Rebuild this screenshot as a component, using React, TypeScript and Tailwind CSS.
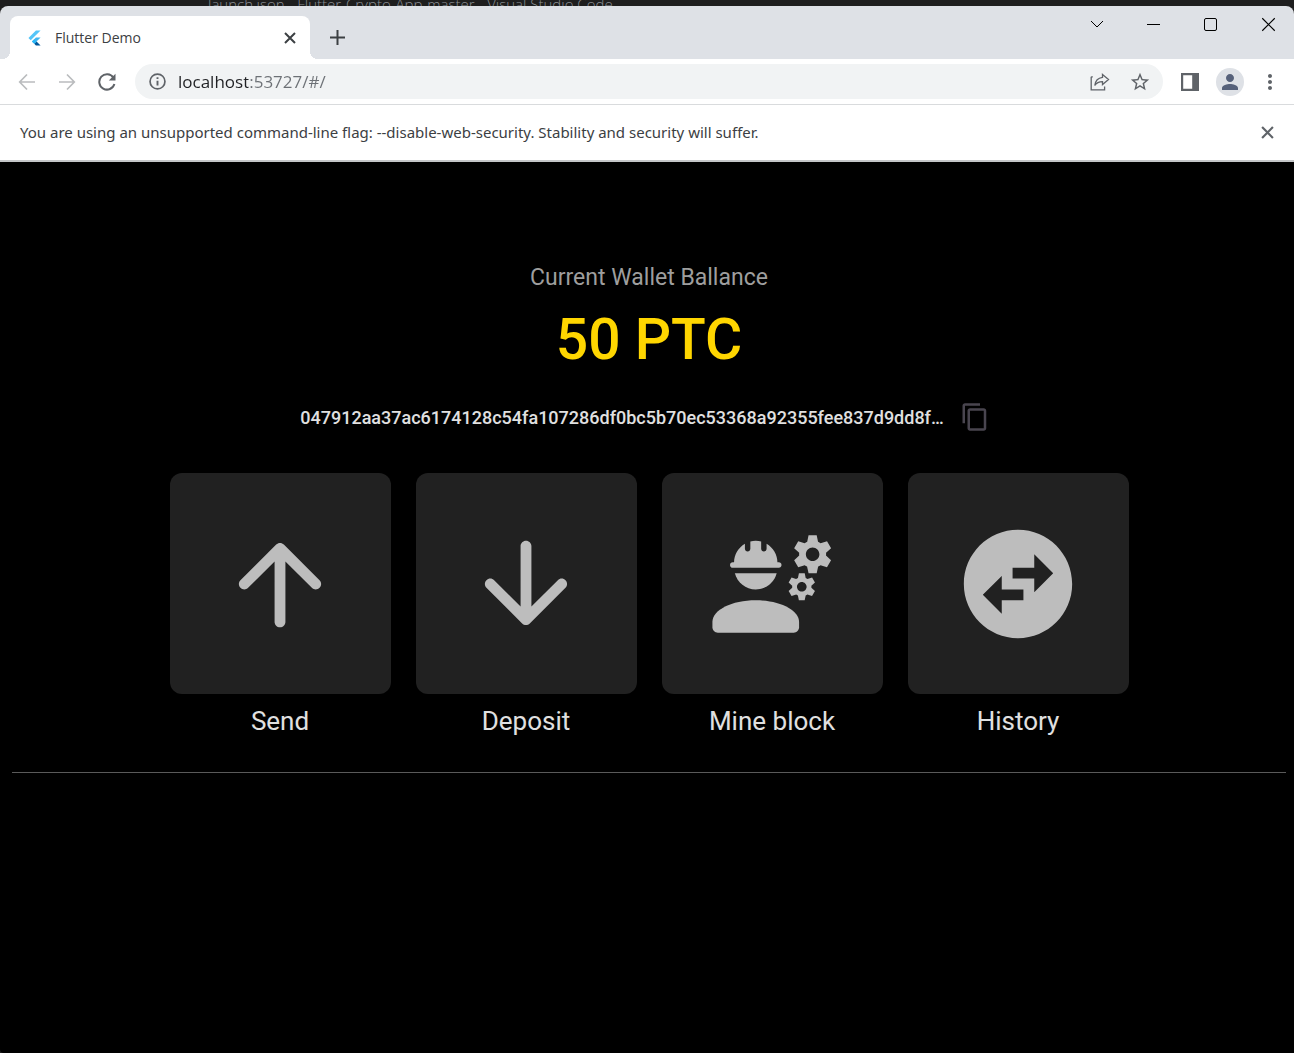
import React from "react";
import { MdContentCopy, MdSwapHorizontalCircle, MdPerson, MdStarBorder, MdMoreVert } from "react-icons/md";

const CHROME_FONT = "font-['Open_Sans','Noto_Sans',sans-serif]";

function FlutterLogo() {
  return (
    <svg viewBox="0 0 24 24" className="h-4 w-[15px] shrink-0" aria-hidden="true">
      <path d="M14.3 0 2.3 12 6 15.7 21.7 0z" fill="#54c5f8" />
      <path d="M14.3 11.1 7.9 17.5l3.7 3.7 10.1-10.1z" fill="#41b6f0" />
      <path d="m11.6 21.2 2.7 2.8h7.4l-6.4-6.5z" fill="#01579b" />
      <path d="m7.9 17.5 3.7-3.7 3.7 3.7-3.7 3.7z" fill="#29b6f6" />
    </svg>
  );
}

function Cross({ className }: { className: string }) {
  return (
    <svg viewBox="0 0 12 12" className={className} fill="none" stroke="currentColor" aria-hidden="true">
      <path d="M1 1l10 10M11 1L1 11" />
    </svg>
  );
}

function UpArrow() {
  return (
    <svg viewBox="0 0 24 24" className="size-[130px]" fill="currentColor" aria-hidden="true">
      <path d="M13 19V7.83l4.88 4.88c.39.39 1.03.39 1.42 0 .39-.39.39-1.02 0-1.41l-6.59-6.59c-.39-.39-1.02-.39-1.41 0l-6.6 6.58c-.39.39-.39 1.02 0 1.41.39.39 1.02.39 1.41 0L11 7.83V19c0 .55.45 1 1 1s1-.45 1-1z" />
    </svg>
  );
}

function DownArrow() {
  return (
    <svg viewBox="0 0 24 24" className="size-[130px]" fill="currentColor" aria-hidden="true">
      <path d="M11 5v11.17l-4.88-4.88c-.39-.39-1.03-.39-1.42 0-.39.39-.39 1.02 0 1.41l6.59 6.59c.39.39 1.02.39 1.41 0l6.59-6.59c.39-.39.39-1.02 0-1.41-.39-.39-1.02-.39-1.41 0L13 16.17V5c0-.55-.45-1-1-1s-1 .45-1 1z" />
    </svg>
  );
}

function Engineer() {
  return (
    <svg viewBox="0 0 24 24" className="size-[130px]" fill="currentColor" aria-hidden="true">
      <path d="M9 15c-4.42 0-8 1.79-8 4v1c0 .55.45 1 1 1h14c.55 0 1-.45 1-1v-1c0-2.21-3.58-4-8-4z" />
      <path d="M4.74 9h8.53c.27 0 .49-.22.49-.49v-.02c0-.27-.22-.49-.49-.49H13c0-1.48-.81-2.75-2-3.45v.95c0 .28-.22.5-.5.5s-.5-.22-.5-.5V4.14C9.68 4.06 9.35 4 9 4s-.68.06-1 .14V5.5c0 .28-.22.5-.5.5S7 5.78 7 5.5v-.95C5.81 5.25 5 6.52 5 8h-.26c-.27 0-.49.22-.49.49v.03c0 .26.22.48.49.48z" />
      <path d="M9 13c1.86 0 3.41-1.28 3.86-3H5.14c.45 1.72 2 3 3.86 3z" />
      <path d="M21.98 6.23l.93-.83-.75-1.3-1.19.39c-.14-.11-.3-.2-.47-.27L20.25 3h-1.5l-.25 1.22c-.17.07-.33.16-.48.27l-1.18-.39-.75 1.3.93.83c-.02.17-.02.35 0 .52l-.93.85.75 1.3 1.2-.38c.13.1.28.18.43.25l.28 1.23h1.5l.27-1.22c.16-.07.3-.15.44-.25l1.19.38.75-1.3-.93-.85c.03-.19.02-.36.01-.53zM19.5 7.75c-.69 0-1.25-.56-1.25-1.25s.56-1.25 1.25-1.25 1.25.56 1.25 1.25-.56 1.25-1.25 1.25z" />
      <path d="M19.4 10.79l-.85.28c-.1-.08-.21-.14-.33-.19l-.18-.88h-1.07l-.18.87c-.12.05-.24.12-.34.19l-.84-.28-.54.93.66.59c-.01.13-.01.25 0 .37l-.66.61.54.93.86-.27c.1.07.2.13.31.18l.18.88h1.07l.19-.87c.11-.05.22-.11.32-.18l.85.27.54-.93-.66-.61c.01-.13.01-.25 0-.37l.66-.59-.53-.93zm-1.9 2.6c-.49 0-.89-.4-.89-.89s.4-.89.89-.89.89.4.89.89-.4.89-.89.89z" />
    </svg>
  );
}

const actions = [
  { label: "Send", icon: <UpArrow /> },
  { label: "Deposit", icon: <DownArrow /> },
  { label: "Mine block", icon: <Engineer /> },
  { label: "History", icon: <MdSwapHorizontalCircle className="size-[130px]" /> },
];

function TitleBar() {
  return (
    <header className="flex h-[53px] items-end rounded-t-lg bg-[#dee1e6] pl-[10px]">
      <div className="relative flex h-[43px] w-[300px] items-center rounded-t-lg bg-white pr-3 pl-[17px] before:absolute before:bottom-0 before:-left-2 before:size-2 before:bg-[radial-gradient(circle_at_0_0,#dee1e6_8px,white_8px)] after:absolute after:-right-2 after:bottom-0 after:size-2 after:bg-[radial-gradient(circle_at_100%_0,#dee1e6_8px,white_8px)]">
        <FlutterLogo />
        <span className="ml-[13px] flex-1 text-sm text-[#3c4043]">Flutter Demo</span>
        <button type="button" aria-label="Close tab" className="grid size-4 place-items-center text-[#3c4043]">
          <Cross className="size-3 stroke-2" />
        </button>
      </div>
      <button type="button" aria-label="New tab" className="grid h-[43px] w-[54px] place-items-center text-[#3c4043]">
        <svg viewBox="0 0 15 15" className="size-[15px]" fill="none" stroke="currentColor" strokeWidth="2" aria-hidden="true">
          <path d="M7.5 0v15M0 7.5h15" />
        </svg>
      </button>
      <div className="ml-auto flex h-full items-start pt-0.5 pr-px text-black">
        <button type="button" aria-label="Search tabs" className="grid h-8 w-14 place-items-center">
          <svg viewBox="0 0 14 8" className="h-2 w-3.5" fill="none" stroke="currentColor" aria-hidden="true">
            <path d="M1 1l6 6 6-6" />
          </svg>
        </button>
        <button type="button" aria-label="Minimize" className="grid h-8 w-14 place-items-center">
          <span className="h-px w-[13px] bg-black" />
        </button>
        <button type="button" aria-label="Maximize" className="grid h-8 w-[58px] place-items-center">
          <span className="size-[13px] rounded-xs border border-black" />
        </button>
        <button type="button" aria-label="Close window" className="grid h-8 w-[54px] place-items-center pl-1">
          <Cross className="size-[15px] stroke-[0.9]" />
        </button>
      </div>
    </header>
  );
}

function Toolbar() {
  return (
    <nav aria-label="Browser toolbar" className="flex h-[46px] items-center border-b border-[#d9dbdd] bg-white pr-[10px] pl-[7px] text-[#5f6368]">
      <button type="button" aria-label="Back" className="grid size-10 place-items-center text-[#babcbe]">
        <svg viewBox="0 0 18 18" className="size-[18px]" fill="none" stroke="currentColor" strokeWidth="1.7" aria-hidden="true">
          <path d="M17 9H2M9 1.5L1.7 9 9 16.5" />
        </svg>
      </button>
      <button type="button" aria-label="Forward" className="grid size-10 place-items-center text-[#babcbe]">
        <svg viewBox="0 0 18 18" className="size-[18px]" fill="none" stroke="currentColor" strokeWidth="1.7" aria-hidden="true">
          <path d="M1 9h15M9 1.5L16.3 9 9 16.5" />
        </svg>
      </button>
      <button type="button" aria-label="Reload" className="grid size-10 place-items-center">
        <svg viewBox="0 0 18 18" className="size-[18px]" fill="none" stroke="currentColor" strokeWidth="2" aria-hidden="true">
          <path d="M15.4 4.6A7.7 7.7 0 1 0 16.4 11" />
          <path d="M17.5 0.8v6.7h-6.7z" fill="currentColor" stroke="none" />
        </svg>
      </button>
      <div className="ml-2 flex h-[35px] flex-1 items-center rounded-full bg-[#f1f3f4] pr-[11px] pl-[14px]">
        <svg viewBox="0 0 16 16" className="size-[17px] shrink-0" fill="none" stroke="currentColor" strokeWidth="1.6" aria-hidden="true">
          <circle cx="8" cy="8" r="7" />
          <path d="M8 7.2v4.6M8 4v1.7" strokeWidth="1.8" />
        </svg>
        <input
          type="text"
          aria-label="Address"
          defaultValue="localhost:53727/#/"
          className="ml-3 min-w-0 flex-1 bg-linear-[to_right,#202124_70px,#6c7075_70px] bg-clip-text text-[17px] text-transparent outline-none"
        />
        <button type="button" aria-label="Share" className="grid size-10 place-items-center">
          <svg viewBox="0 0 20 18" className="h-[18px] w-5" fill="none" stroke="currentColor" strokeWidth="1.3" aria-hidden="true">
            <path d="M1.2 3.8v13h13.4V13.5M1.2 3.8h1.6" />
            <path d="M12.5 1.5l6 5-6 5V8.6C9 8.6 6.5 9.7 4.8 12.5c.5-4 2.9-7.5 7.7-8.1z" />
          </svg>
        </button>
        <button type="button" aria-label="Bookmark this tab" className="-mr-2 grid size-10 place-items-center">
          <MdStarBorder className="size-[22px]" />
        </button>
      </div>
      <button type="button" aria-label="Side panel" className="ml-[7px] grid size-10 place-items-center">
        <svg viewBox="0 0 18 18" className="size-[18px]" fill="currentColor" aria-hidden="true">
          <path fillRule="evenodd" d="M0 0h18v18H0zM2.2 2.2v13.6h9V2.2z" />
        </svg>
      </button>
      <button type="button" aria-label="Profile" className="mr-3 ml-1.5 grid size-7 place-items-center rounded-full bg-[#dee1e6] text-[#56617a]">
        <MdPerson className="size-6" />
      </button>
      <button type="button" aria-label="Menu" className="grid w-7 place-items-center">
        <MdMoreVert className="size-6" />
      </button>
    </nav>
  );
}

function InfoBar() {
  return (
    <div role="status" className="flex h-[57px] items-center justify-between border-b-2 border-[#c4c6c8] bg-white px-5">
      <p className="font-['Noto_Sans',sans-serif] text-[15px] text-[#3c4043]">
        You are using an unsupported command-line flag: --disable-web-security. Stability and security will suffer.
      </p>
      <button type="button" aria-label="Dismiss" className="text-[#5f6368]">
        <Cross className="size-[13px] stroke-2" />
      </button>
    </div>
  );
}

export default function App() {
  return (
    <div className={`flex min-h-screen flex-col bg-[#1e1e1e] ${CHROME_FONT}`}>
      <div className="flex h-1.5 items-end overflow-hidden pl-[208px] text-[15px] text-[#8b8f94]">
        <span className="h-2.5 leading-4 font-light whitespace-nowrap">
          launch.json - Flutter-Crypto-App-master - Visual Studio Code
        </span>
      </div>
      <TitleBar />
      <Toolbar />
      <InfoBar />
      <main className="flex flex-1 flex-col items-center rounded-bl-sm bg-black pt-[98px] pr-2 pl-3 font-['Roboto',sans-serif] text-[#e0e0e0]">
        <h1 className="text-[23px] leading-9 text-[#9e9e9e]">Current Wallet Ballance</h1>
        <p className="mt-2 text-[57px] leading-[72px] font-medium text-[#ffd600]">50 PTC</p>
        <div className="mt-[21px] flex h-10 items-center gap-4 pr-2">
          <span className="text-[18px] font-medium">
            047912aa37ac6174128c54fa107286df0bc5b70ec53368a92355fee837d9dd8f…
          </span>
          <button type="button" aria-label="Copy address" className="text-[#49454f]">
            <MdContentCopy className="size-[30px]" />
          </button>
        </div>
        <div className="mt-9 flex gap-[25px]">
          {actions.map(({ label, icon }) => (
            <button key={label} type="button" className="flex flex-col items-center gap-[9px]">
              <span className="grid size-[221px] place-items-center rounded-xl bg-[#212121] text-[#bdbdbd]">{icon}</span>
              <span className="text-[26px] leading-9">{label}</span>
            </button>
          ))}
        </div>
        <hr className="mt-[33px] w-full border-[#5a5a5a]" />
      </main>
    </div>
  );
}
